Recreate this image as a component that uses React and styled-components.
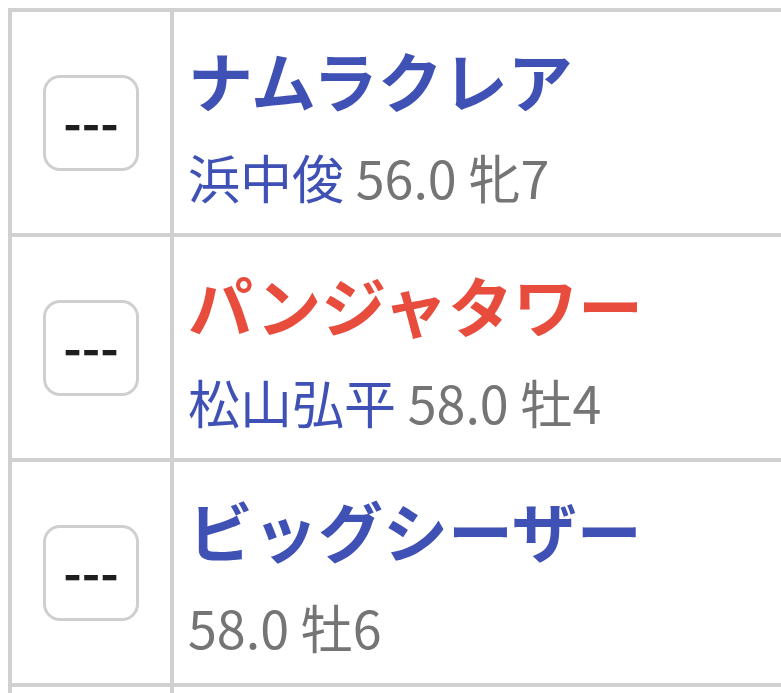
import React from 'react';
import styled, { createGlobalStyle } from 'styled-components';

const GlobalStyle = createGlobalStyle`
  html {
    overflow: hidden;
    background: #ffffff;
  }
  body {
    margin: 8px 0 0 8px;
    font-family: "Noto Sans CJK JP", "Noto Sans", sans-serif;
  }
`;

const Table = styled.div`
  width: 1000px;
  border-top: 4px solid #d0d0d0;
  border-left: 4px solid #d0d0d0;
`;

const Row = styled.div`
  display: flex;
  height: 221px;
  border-bottom: 4px solid #d0d0d0;
`;

const MarkCell = styled.div`
  width: 158px;
  flex-shrink: 0;
  display: flex;
  align-items: center;
  justify-content: center;
  border-right: 4px solid #d0d0d0;
`;

const MarkButton = styled.div`
  box-sizing: border-box;
  width: 96px;
  height: 96px;
  padding-bottom: 6px;
  border: 3px solid #cfcfcf;
  border-radius: 17px;
  display: flex;
  align-items: center;
  justify-content: center;
  color: #1e1e1e;
  font-size: 50px;
  font-weight: 700;
  line-height: 1;
`;

const InfoCell = styled.div`
  flex: 1;
  padding: 32px 0 0 14px;
`;

const HorseName = styled.div`
  font-size: 65px;
  font-weight: 700;
  line-height: 1.1;
  color: ${props => (props.$red ? '#e74c3c' : '#3f51b5')};
  white-space: nowrap;
`;

const SubLine = styled.div`
  margin-top: 32px;
  font-size: 52px;
  line-height: 1.1;
  color: #757575;
  white-space: nowrap;
`;

const Jockey = styled.span`
  color: #3f51b5;
`;

const horses = [
  { name: 'ナムラクレア', jockey: '浜中俊', weight: '56.0', sexAge: '牝7' },
  { name: 'パンジャタワー', jockey: '松山弘平', weight: '58.0', sexAge: '牡4', red: true },
  { name: 'ビッグシーザー', jockey: '', weight: '58.0', sexAge: '牡6' },
];

const App = () => {
  return (
    <>
      <GlobalStyle />
      <Table>
        {horses.map(h => (
          <Row key={h.name}>
            <MarkCell>
              <MarkButton>---</MarkButton>
            </MarkCell>
            <InfoCell>
              <HorseName $red={h.red}>{h.name}</HorseName>
              <SubLine>
                {h.jockey && <Jockey>{h.jockey} </Jockey>}
                {h.weight} {h.sexAge}
              </SubLine>
            </InfoCell>
          </Row>
        ))}
        <Row>
          <MarkCell />
          <InfoCell />
        </Row>
      </Table>
    </>
  );
};

export default App;
